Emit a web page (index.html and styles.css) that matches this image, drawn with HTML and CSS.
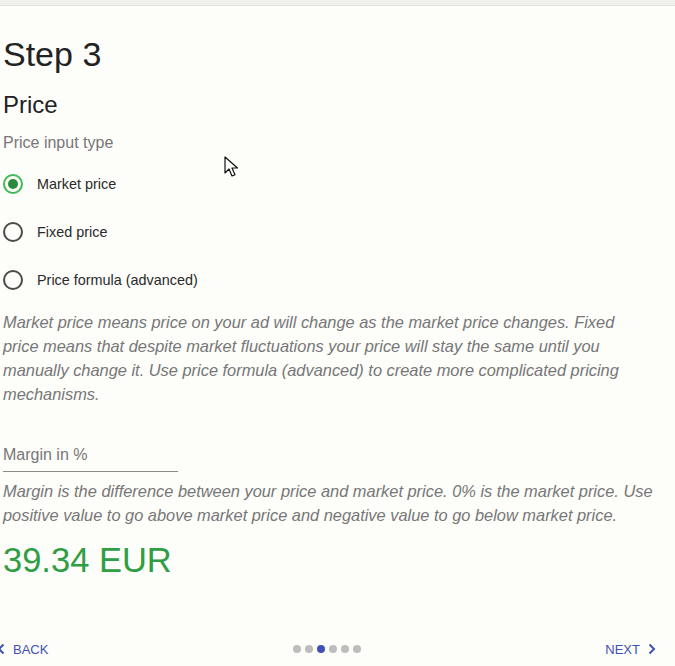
FILE: index.html
```html
<!DOCTYPE html>
<html lang="en">
<head>
    <meta charset="UTF-8">
    <meta name="viewport" content="width=device-width, initial-scale=1.0">
    <title>Step 3 - Price</title>
    <link rel="stylesheet" href="styles.css">
</head>
<body>
    <div class="top-bar"></div>

    <main class="step">
        <h1 class="step-title">Step 3</h1>
        <h2 class="section-title">Price</h2>
        <p class="group-label">Price input type</p>

        <div class="radio-group">
            <label class="radio-row">
                <input type="radio" name="priceType" value="market" checked>
                <span class="radio-mark"></span>
                <span class="radio-text">Market price</span>
            </label>
            <label class="radio-row">
                <input type="radio" name="priceType" value="fixed">
                <span class="radio-mark"></span>
                <span class="radio-text">Fixed price</span>
            </label>
            <label class="radio-row">
                <input type="radio" name="priceType" value="formula">
                <span class="radio-mark"></span>
                <span class="radio-text">Price formula (advanced)</span>
            </label>
        </div>

        <p class="hint hint-type">Market price means price on your ad will change as the market price changes. Fixed price means that despite market fluctuations your price will stay the same until you manually change it. Use price formula (advanced) to create more complicated pricing mechanisms.</p>

        <div class="text-field">
            <input type="text" id="margin" placeholder="Margin in %">
        </div>

        <p class="hint hint-margin">Margin is the difference between your price and market price. 0% is the market price. Use positive value to go above market price and negative value to go below market price.</p>

        <p class="price-total">39.34 EUR</p>
    </main>

    <nav class="stepper">
        <button class="step-btn step-back" type="button">
            <svg width="8" height="12" viewBox="0 0 8 12"><path d="M6.5 1.5 2 6l4.5 4.5" fill="none" stroke="currentColor" stroke-width="2"/></svg>
            Back
        </button>
        <div class="dots">
            <span class="dot"></span>
            <span class="dot"></span>
            <span class="dot active"></span>
            <span class="dot"></span>
            <span class="dot"></span>
            <span class="dot"></span>
        </div>
        <button class="step-btn step-next" type="button">
            Next
            <svg width="8" height="12" viewBox="0 0 8 12"><path d="M1.5 1.5 6 6l-4.5 4.5" fill="none" stroke="currentColor" stroke-width="2"/></svg>
        </button>
    </nav>

    <svg class="pointer" width="14" height="22" viewBox="0 0 14 22">
        <path d="M1 1v16l4-4 3 7 3-1.3-3-6.7h5.5z" fill="#fff" stroke="#111" stroke-width="1.2" stroke-linejoin="round"/>
    </svg>
</body>
</html>
```

FILE: styles.css
```css
:root {
    --text: #222;
    --muted: #777;
    --green: #2f9e44;
    --radio-green: #3cba54;
    --indigo: #3f51b5;
    --background: #fdfdfa;
}

* {
    margin: 0;
    padding: 0;
    box-sizing: border-box;
    font-family: 'Liberation Sans', Arial, sans-serif;
}

body {
    background-color: var(--background);
    min-height: 100vh;
    display: flex;
    flex-direction: column;
    color: var(--text);
    overflow: hidden;
}

.top-bar {
    height: 6px;
    background: #f0f0ed;
    border-bottom: 1px solid #e2e2df;
}

.step {
    padding: 28px 0 0 3px;
    width: 664px;
}

.step-title {
    font-size: 34px;
    font-weight: 400;
    line-height: 40px;
}

.section-title {
    font-size: 24px;
    font-weight: 400;
    line-height: 28px;
    margin-top: 17px;
}

.group-label {
    font-size: 16px;
    line-height: 20px;
    color: var(--muted);
    margin-top: 14px;
}

.radio-group {
    margin-top: 7px;
    display: flex;
    flex-direction: column;
}

.radio-row {
    height: 48px;
    display: flex;
    align-items: center;
    gap: 14px;
    cursor: pointer;
}

.radio-row input {
    display: none;
}

.radio-mark {
    width: 20px;
    height: 20px;
    border-radius: 50%;
    border: 2px solid #4a4a4a;
    display: flex;
    align-items: center;
    justify-content: center;
}

.radio-row input:checked + .radio-mark {
    border-color: var(--radio-green);
}

.radio-row input:checked + .radio-mark::after {
    content: "";
    width: 10px;
    height: 10px;
    border-radius: 50%;
    background: #2a8a3a;
}

.radio-text {
    font-size: 14.4px;
    color: #2a2a2a;
}

.hint {
    font-size: 16.4px;
    line-height: 24px;
    font-style: italic;
    color: var(--muted);
}

.hint-type {
    margin-top: 6px;
    max-width: 648px;
}

.text-field {
    margin-top: 39px;
    width: 175px;
    border-bottom: 1px solid #8a8a8a;
    padding-bottom: 6px;
}

.text-field input {
    width: 100%;
    border: none;
    background: transparent;
    font-size: 16px;
    line-height: 20px;
    height: 20px;
    color: var(--text);
}

.text-field input::placeholder {
    color: var(--muted);
}

.text-field input:focus {
    outline: none;
}

.hint-margin {
    margin-top: 7px;
}

.price-total {
    margin-top: 13px;
    font-size: 34.5px;
    line-height: 40px;
    color: var(--green);
}

.stepper {
    margin-top: auto;
    height: 34px;
    display: flex;
    align-items: center;
    justify-content: space-between;
    padding-right: 19px;
}

.step-btn {
    display: flex;
    align-items: center;
    gap: 8px;
    background: none;
    border: none;
    color: var(--indigo);
    font-size: 13px;
    text-transform: uppercase;
    cursor: pointer;
}

.step-back {
    margin-left: -3px;
}

.dots {
    display: flex;
    gap: 4px;
}

.dot {
    width: 8px;
    height: 8px;
    border-radius: 50%;
    background: #bdbdbd;
}

.dot.active {
    background: var(--indigo);
}

.pointer {
    position: absolute;
    left: 224px;
    top: 156px;
}
```
